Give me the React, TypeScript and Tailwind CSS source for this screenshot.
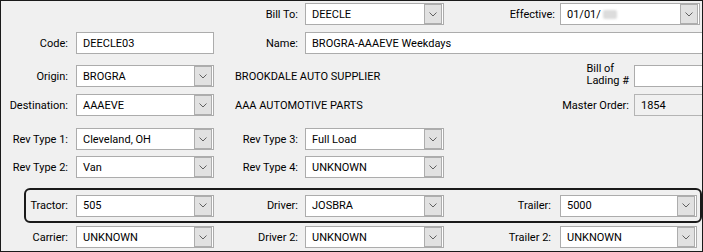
import React from "react";

type FieldProps = {
  value?: React.ReactNode;
  w: string;
  drop?: boolean;
  disabled?: boolean;
};

function Chevron() {
  return (
    <svg width="8" height="5" viewBox="0 0 8 5" className="block">
      <path d="M0.5 0.5 L4 4 L7.5 0.5" fill="none" stroke="#606060" strokeWidth="1" />
    </svg>
  );
}

function Field({ value, w, drop, disabled }: FieldProps) {
  return (
    <div
      className={`${w} h-[22px] shrink-0 flex items-center border ${
        disabled ? "bg-[#f0f0f0] border-[#b4b4b4]" : "bg-white border-[#acacac]"
      }`}
    >
      <span className="pl-[6px] flex-1 flex items-center truncate">{value}</span>
      {drop && (
        <div className="mr-[1px] h-[20px] w-[18px] flex items-center justify-center border border-[#adadad] bg-[#e1e1e1]">
          <Chevron />
        </div>
      )}
    </div>
  );
}

function Label({ w, text }: { w: string; text: string }) {
  return <div className={`${w} shrink-0 text-right whitespace-nowrap`}>{text}</div>;
}

export default function App() {
  return (
    <div
      className="w-[703px] h-[252px] overflow-hidden border border-[#1a1a1a] bg-[#f0f0f0] text-[11px] leading-[13px] text-black"
      style={{ fontFamily: "Roboto, 'Liberation Sans', sans-serif" }}
    >
      {/* Bill To / Effective */}
      <div className="mt-[2px] flex items-center">
        <div className="w-[213px] shrink-0" />
        <Label w="w-[84px]" text="Bill To:" />
        <div className="ml-[7px]">
          <Field w="w-[139px]" value="DEECLE" drop />
        </div>
        <Label w="w-[111px]" text="Effective:" />
        <div className="ml-[5px]">
          <Field
            w="w-[140px]"
            value={
              <>
                01/01/
                <span className="ml-[2px] inline-block w-[14px] h-[9px] rounded-[2px] bg-[#dcdcdc] blur-[1px]" />
              </>
            }
            drop
          />
        </div>
      </div>

      {/* Code / Name */}
      <div className="mt-[7px] flex items-center">
        <Label w="w-[67px]" text="Code:" />
        <div className="ml-[8px]">
          <Field w="w-[138px]" value="DEECLE03" />
        </div>
        <Label w="w-[84px]" text="Name:" />
        <div className="ml-[7px]">
          <Field w="w-[420px]" value="BROGRA-AAAEVE Weekdays" />
        </div>
      </div>

      {/* Origin */}
      <div className="mt-[11px] flex items-center">
        <Label w="w-[67px]" text="Origin:" />
        <div className="ml-[8px]">
          <Field w="w-[138px]" value="BROGRA" drop />
        </div>
        <div className="w-[235px] shrink-0 pl-[21px] whitespace-nowrap">BROOKDALE AUTO SUPPLIER</div>
        <div className="w-[180px] shrink-0 flex justify-end">
          <div className="leading-[12px] mt-[-3px] text-left">
            Bill of
            <br />
            Lading #
          </div>
        </div>
        <div className="ml-[5px]">
          <Field w="w-[120px]" />
        </div>
      </div>

      {/* Destination */}
      <div className="mt-[7px] flex items-center">
        <Label w="w-[67px]" text="Destination:" />
        <div className="ml-[8px]">
          <Field w="w-[138px]" value="AAAEVE" drop />
        </div>
        <div className="w-[235px] shrink-0 pl-[21px] whitespace-nowrap">AAA AUTOMOTIVE PARTS</div>
        <Label w="w-[180px]" text="Master Order:" />
        <div className="ml-[5px]">
          <Field w="w-[120px]" value="1854" disabled />
        </div>
      </div>

      {/* Rev Type 1 / 3 */}
      <div className="mt-[12px] flex items-center">
        <Label w="w-[67px]" text="Rev Type 1:" />
        <div className="ml-[8px]">
          <Field w="w-[138px]" value="Cleveland, OH" drop />
        </div>
        <Label w="w-[84px]" text="Rev Type 3:" />
        <div className="ml-[7px]">
          <Field w="w-[139px]" value="Full Load" drop />
        </div>
      </div>

      {/* Rev Type 2 / 4 */}
      <div className="mt-[6px] flex items-center">
        <Label w="w-[67px]" text="Rev Type 2:" />
        <div className="ml-[8px]">
          <Field w="w-[138px]" value="Van" drop />
        </div>
        <Label w="w-[84px]" text="Rev Type 4:" />
        <div className="ml-[7px]">
          <Field w="w-[139px]" value="UNKNOWN" drop />
        </div>
      </div>

      {/* Highlighted tractor / driver / trailer */}
      <div className="mt-[10px] ml-[23px] w-[678px] h-[35px] flex items-center border-2 border-[#1a1a1a] rounded-[6px]">
        <Label w="w-[42px]" text="Tractor:" />
        <div className="ml-[8px]">
          <Field w="w-[138px]" value="505" drop />
        </div>
        <Label w="w-[84px]" text="Driver:" />
        <div className="ml-[7px]">
          <Field w="w-[139px]" value="JOSBRA" drop />
        </div>
        <Label w="w-[107px]" text="Trailer:" />
        <div className="ml-[9px]">
          <Field w="w-[137px]" value="5000" drop />
        </div>
      </div>

      {/* Carrier / Driver 2 / Trailer 2 */}
      <div className="mt-[3px] flex items-center">
        <Label w="w-[67px]" text="Carrier:" />
        <div className="ml-[8px]">
          <Field w="w-[138px]" value="UNKNOWN" drop />
        </div>
        <Label w="w-[84px]" text="Driver 2:" />
        <div className="ml-[7px]">
          <Field w="w-[139px]" value="UNKNOWN" drop />
        </div>
        <Label w="w-[107px]" text="Trailer 2:" />
        <div className="ml-[9px]">
          <Field w="w-[137px]" value="UNKNOWN" drop />
        </div>
      </div>
    </div>
  );
}
